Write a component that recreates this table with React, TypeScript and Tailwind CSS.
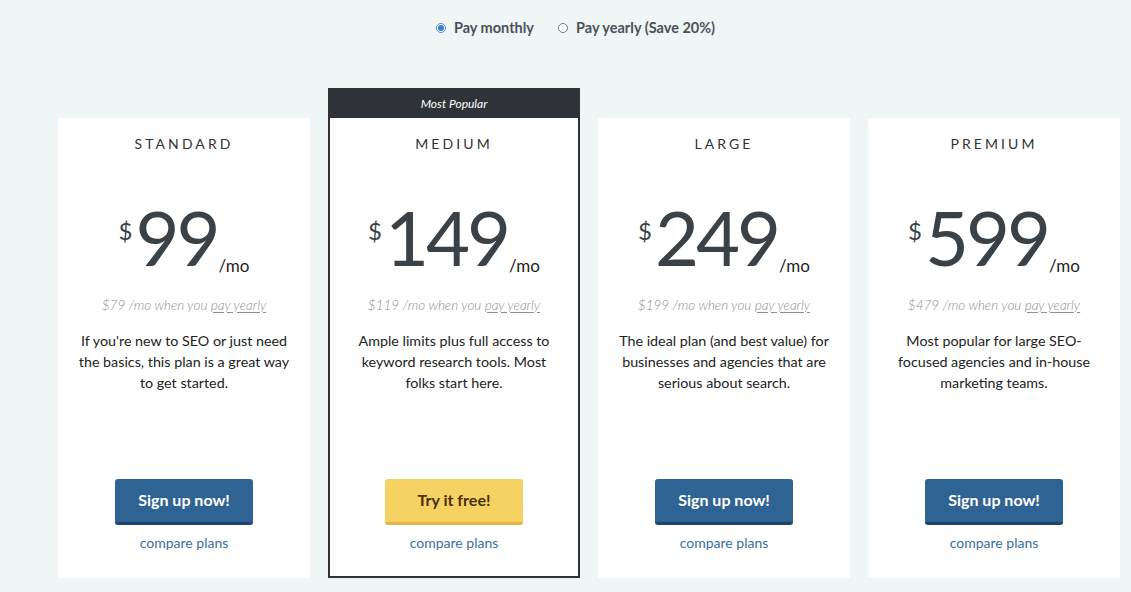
import React, { useState } from 'react';

type Plan = {
  name: string;
  price: number;
  yearly: number;
  blurb: string;
  popular?: boolean;
};

const plans: Plan[] = [
  { name: 'Standard', price: 99, yearly: 79, blurb: "If you're new to SEO or just need the basics, this plan is a great way to get started." },
  { name: 'Medium', price: 149, yearly: 119, blurb: 'Ample limits plus full access to keyword research tools. Most folks start here.', popular: true },
  { name: 'Large', price: 249, yearly: 199, blurb: 'The ideal plan (and best value) for businesses and agencies that are serious about search.' },
  { name: 'Premium', price: 599, yearly: 479, blurb: 'Most popular for large SEO-focused agencies and in-house marketing teams.' },
];

const PlanBody: React.FC<{ plan: Plan }> = ({ plan }) => (
  <div className="flex flex-col items-center h-[460px] pt-4 pb-[25px] px-[18px] text-center">
    <div className="text-[14px] leading-5 tracking-[0.22em] text-[#333] uppercase">{plan.name}</div>

    <div className="flex items-start mt-[45px] text-[#3b4247]">
      <span className="text-[24px] leading-none mt-[20px] mr-[3px]">$</span>
      <span className="text-[76px] leading-[76px] tracking-[-0.04em]">{plan.price}</span>
      <span className="text-[17px] leading-none self-end mb-[1px] ml-[1px] text-[#222]">/mo</span>
    </div>

    <div className="mt-[20px] text-[13.5px] leading-5 italic font-light text-[#8e8e8e]">
      ${plan.yearly} /mo when you <span className="underline underline-offset-2">pay yearly</span>
    </div>

    <p className="mt-[15px] text-[14.3px] leading-[21px] text-[#222]">{plan.blurb}</p>

    <div className="mt-auto flex flex-col items-center">
      {plan.popular ? (
        <button className="w-[138px] h-[46px] rounded-[3px] bg-[#f6d262] border-b-[3px] border-[#e0b84a] text-[16px] font-bold text-[#4a2e0c]">
          Try it free!
        </button>
      ) : (
        <button className="w-[138px] h-[46px] rounded-[3px] bg-[#2f6394] border-b-[3px] border-[#1e4569] text-[16px] font-bold text-white">
          Sign up now!
        </button>
      )}
      <a className="mt-[8px] text-[14px] leading-5 text-[#3a6f9e]">compare plans</a>
    </div>
  </div>
);

export default function App() {
  const [yearly, setYearly] = useState(false);

  return (
    <div className="w-[1131px] h-[592px] bg-[#f0f5f6] font-['Lato','Noto_Sans',sans-serif] overflow-hidden">
      <div className="flex justify-center items-center gap-[24px] pt-[17px] pl-[20px] text-[14.5px] font-bold text-[#4b5157]">
        <label className="flex items-center gap-[8px] cursor-pointer" onClick={() => setYearly(false)}>
          <span className={`w-[10px] h-[10px] rounded-full flex items-center justify-center border ${!yearly ? 'border-[#4a89dc] bg-white' : 'border-[#777] bg-white'}`}>
            {!yearly && <span className="w-[6px] h-[6px] rounded-full bg-[#3a7bd5]" />}
          </span>
          Pay monthly
        </label>
        <label className="flex items-center gap-[8px] cursor-pointer" onClick={() => setYearly(true)}>
          <span className={`w-[10px] h-[10px] rounded-full flex items-center justify-center border ${yearly ? 'border-[#4a89dc] bg-white' : 'border-[#777] bg-white'}`}>
            {yearly && <span className="w-[6px] h-[6px] rounded-full bg-[#3a7bd5]" />}
          </span>
          Pay yearly (Save 20%)
        </label>
      </div>

      <div className="flex items-end gap-[18px] pl-[58px] mt-[49px]">
        {plans.map((plan) =>
          plan.popular ? (
            <div key={plan.name} className="w-[252px] border-2 border-[#2f3338] bg-white flex flex-col">
              <div className="h-[28px] bg-[#2f3338] text-white text-[12px] italic flex items-center justify-center">Most Popular</div>
              <div className="-mx-[2px] -mb-[2px]">
                <PlanBody plan={plan} />
              </div>
            </div>
          ) : (
            <div key={plan.name} className="w-[252px] bg-white">
              <PlanBody plan={plan} />
            </div>
          )
        )}
      </div>
    </div>
  );
}
